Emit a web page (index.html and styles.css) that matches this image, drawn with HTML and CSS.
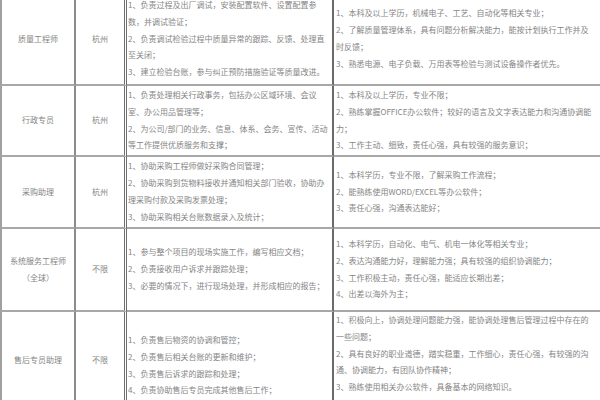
FILE: index.html
```html
<!DOCTYPE html>
<html lang="zh">
<head>
<meta charset="utf-8">
<link rel="stylesheet" href="styles.css">
</head>
<body>
<div class="sheet">
  <div class="grid">
    <div class="c c1 r1">质量工程师</div>
    <div class="c c2 r1">杭州</div>
    <div class="c c3 r1">1、负责过程及出厂调试，安装配置软件、设置配置参<br>数，并调试验证；<br>2、负责调试检验过程中质量异常的跟踪、反馈、处理直<br>至关闭；<br>3、建立检验台账，参与纠正预防措施验证等质量改进。</div>
    <div class="c c4 r1">1、本科及以上学历，机械电子、工艺、自动化等相关专业；<br>2、了解质量管理体系，具有问题分析解决能力，能按计划执行工作并及<br>时反馈；<br>3、熟悉电源、电子负载、万用表等检验与测试设备操作者优先。</div>

    <div class="c c1">行政专员</div>
    <div class="c c2">杭州</div>
    <div class="c c3">1、负责处理相关行政事务，包括办公区域环境、会议<br>室、办公用品管理等；<br>2、为公司/部门的业务、信息、体系、会务、宣传、活动<br>等工作提供优质服务和支撑；</div>
    <div class="c c4">1、本科及以上学历，专业不限；<br>2、熟练掌握OFFICE办公软件；较好的语言及文字表达能力和沟通协调能<br>力；<br>3、工作主动、细致，责任心强，具有较强的服务意识；</div>

    <div class="c c1">采购助理</div>
    <div class="c c2">杭州</div>
    <div class="c c3">1、协助采购工程师做好采购合同管理；<br>2、协助采购到货物料接收并通知相关部门验收，协助办<br>理采购付款及采购发票处理；<br>3、协助采购相关台账数据录入及统计；</div>
    <div class="c c4">1、本科学历，专业不限，了解采购工作流程；<br>2、能熟练使用WORD/EXCEL等办公软件；<br>3、责任心强，沟通表达能好；</div>

    <div class="c c1">系统服务工程师<br>（全球）</div>
    <div class="c c2">不限</div>
    <div class="c c3">1、参与整个项目的现场实施工作，编写相应文档；<br>2、负责接收用户诉求并跟踪处理；<br>3、必要的情况下，进行现场处理，并形成相应的报告；</div>
    <div class="c c4">1、本科学历，自动化、电气、机电一体化等相关专业；<br>2、表达沟通能力好，理解能力强；具有较强的组织协调能力；<br>3、工作积极主动，责任心强，能适应长期出差；<br>4、出差以海外为主；</div>

    <div class="c c1 r5 p1">售后专员助理</div>
    <div class="c c2 r5 p1">不限</div>
    <div class="c c3 r5 p3">1、负责售后物资的协调和管控；<br>2、负责售后相关台账的更新和维护；<br>3、负责售后诉求的跟踪和处理；<br>4、负责协助售后专员完成其他售后工作；</div>
    <div class="c c4 r5 p4">1、积极向上，协调处理问题能力强，能协调处理售后管理过程中存在的<br>一些问题；<br>2、具有良好的职业道德，踏实稳重，工作细心，责任心强，有较强的沟<br>通、协调能力，有团队协作精神；<br>3、熟练使用相关办公软件，具备基本的网络知识。</div>
  </div>
</div>
</body>
</html>
```

FILE: styles.css
```css
html, body {
  margin: 0;
  padding: 0;
  background: #ffffff;
  overflow: hidden;
}

.sheet {
  width: 600px;
  height: 400px;
  overflow: hidden;
}

.grid {
  margin-top: -6px;
  display: grid;
  grid-template-columns: 76px 51px 207px 282px;
  grid-template-rows: 92px 71px 72px 83px 100px;
  width: 616px;
  font-family: "Noto Sans CJK SC", "Noto Sans", sans-serif;
  font-size: 8px;
  line-height: 16.8px;
  color: #858585;
  white-space: nowrap;
}

.c {
  display: flex;
  align-items: center;
  border-bottom: 2px solid #a8a8a8;
  box-sizing: border-box;
}

.c1 {
  justify-content: center;
  text-align: center;
  border-left: 2px solid #a0a0a0;
  border-right: 2px solid #8c8c8c;
}

.c2 {
  justify-content: center;
  text-align: center;
  border-right: 3px double #6e6e6e;
}

.c3 {
  padding-left: 1px;
  border-right: 2px solid #6a6a6a;
}

.c4 {
  padding-left: 2px;
}

.r5 {
  align-items: flex-start;
  border-bottom: none;
}

.p1 { padding-top: 40px; }
.p3 { padding-top: 20px; }
.p4 { padding-top: 0; }
```
